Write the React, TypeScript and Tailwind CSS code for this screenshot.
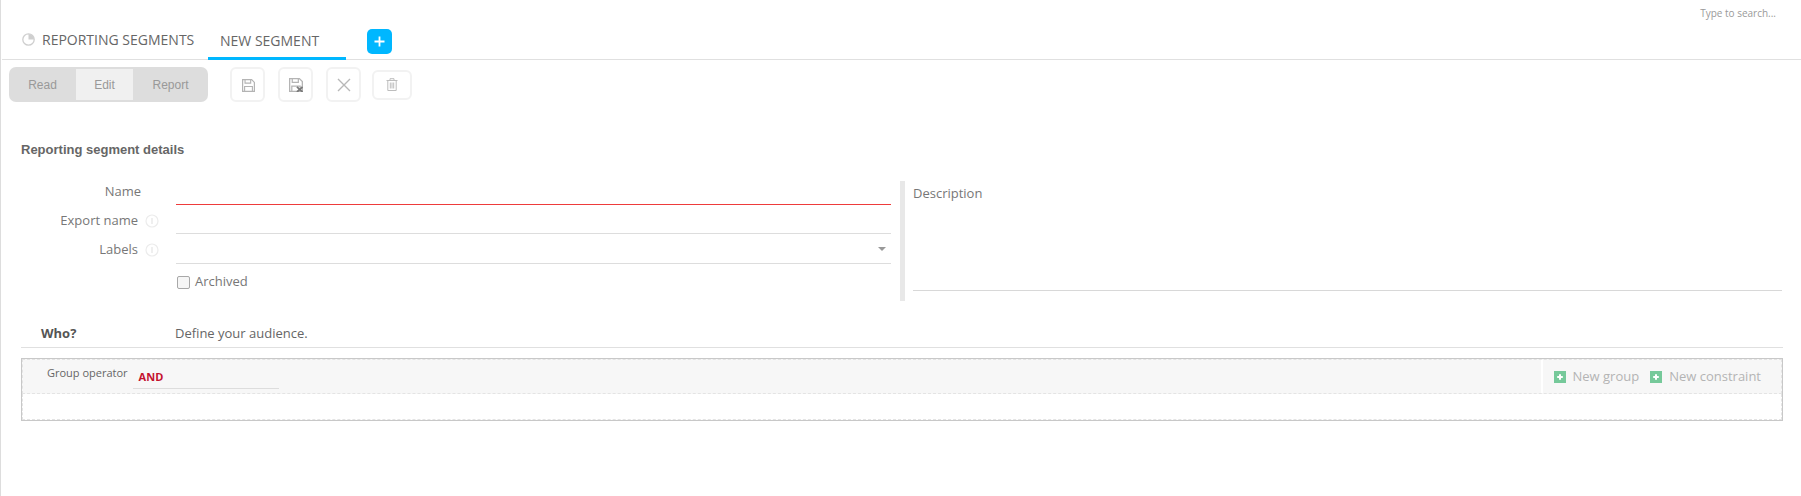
import React from "react";

const open = "font-['Open_Sans',sans-serif]";
const arial = "font-['Liberation_Sans',Arial,sans-serif]";

function Info() {
  return (
    <svg width="14" height="14" viewBox="0 0 14 14" className="ml-[7px] shrink-0">
      <circle cx="7" cy="7" r="6" fill="none" stroke="#ececec" strokeWidth="1.2" />
      <path d="M7 4v6" stroke="#e4e4e4" strokeWidth="1.2" />
    </svg>
  );
}

function Floppy({ x }: { x?: boolean }) {
  return (
    <svg width={x ? 14 : 13} height={x ? 14 : 13} viewBox="0 0 15 15" className="ml-[1px] mt-[1px]">
      <path d="M.7.7h10.4l3.2 3.2v10.4H.7z" fill="none" stroke="#b4b4b4" strokeWidth="1.4" />
      <path d="M3.5 1v3.8h6.5V1" fill="none" stroke="#b4b4b4" strokeWidth="1.3" />
      <path d="M3 14V8.6h9V14" fill="none" stroke="#b4b4b4" strokeWidth="1.3" />
      {x && <path d="M8.5 9.5l6 5.5M14.5 9.5l-6 5.5" stroke="#7a7a7a" strokeWidth="1.9" />}
    </svg>
  );
}

function GreenPlus() {
  return (
    <svg width="12" height="12" viewBox="0 0 12 12" className="shrink-0">
      <rect width="12" height="12" fill="#76c99a" />
      <path d="M6 3.2v5.6M3.2 6h5.6" stroke="#fff" strokeWidth="2" />
    </svg>
  );
}

function ToolBtn({ children }: { children: React.ReactNode }) {
  return (
    <div className="w-[35px] h-[35px] border-2 border-[#f2f2f2] rounded-[6px] flex items-center justify-center">
      {children}
    </div>
  );
}

export default function App() {
  return (
    <div className={`w-[1801px] h-[496px] bg-white border-l-[1.5px] border-[#dddddd] overflow-hidden ${open}`}>
      <div className="h-[24px] flex justify-end items-center pr-[25px] pt-[2px]">
        <span className="text-[10px] text-[#9a9a9a]">Type to search...</span>
      </div>

      <div className="h-[36px] border-b border-[#e0e0e0] flex items-start ml-[1px]">
        <div className="flex items-center h-[31px] pl-[20px] w-[206px]">
          <svg width="13" height="13" viewBox="0 0 13 13" className="mr-[7px] shrink-0">
            <circle cx="6.5" cy="6.5" r="5.7" fill="none" stroke="#cfcfcf" strokeWidth="1.3" />
            <path d="M6.5 6.5V1A5.5 5.5 0 0 1 12 6.5z" fill="#cfcfcf" />
          </svg>
          <span className="text-[14px] text-[#666] whitespace-nowrap">REPORTING SEGMENTS</span>
        </div>
        <div className="w-[138px] h-[36px] border-b-[3px] border-[#00b7ff] pl-[12px] flex items-center pb-[1px]">
          <span className="text-[14px] text-[#666] whitespace-nowrap">NEW SEGMENT</span>
        </div>
        <div className="ml-[21px] mt-[5px] w-[25px] h-[25px] rounded-[5px] bg-[#00b7ff] flex items-center justify-center">
          <svg width="11" height="11" viewBox="0 0 11 11">
            <path d="M5.5.5v10M.5 5.5h10" stroke="#fff" strokeWidth="1.8" />
          </svg>
        </div>
      </div>

      <div className="flex items-center mt-[7px] ml-[8px] h-[35px]">
        <div className={`w-[199px] h-[35px] rounded-[7px] bg-[#dddddd] flex items-center text-[12px] text-[#999] ${arial}`}>
          <span className="w-[67px] text-center pt-[1px]">Read</span>
          <span className="w-[57px] h-[31px] bg-[#f0f0f0] flex items-center justify-center pt-[1px]">Edit</span>
          <span className="w-[75px] text-center pt-[1px]">Report</span>
        </div>
        <div className="ml-[22px] flex items-center gap-[13px]">
          <ToolBtn><Floppy /></ToolBtn>
          <ToolBtn><Floppy x /></ToolBtn>
          <ToolBtn>
            <svg width="14" height="14" viewBox="0 0 14 14">
              <path d="M1 1l12 12M13 1L1 13" stroke="#b8b8b8" strokeWidth="1.4" />
            </svg>
          </ToolBtn>
        </div>
        <div className="ml-[11px] w-[40px] h-[30px] border-2 border-[#f2f2f2] rounded-[6px] flex items-center justify-center">
          <svg width="12" height="13" viewBox="0 0 12 13">
            <path d="M.5 2.5h11M4 2.5V.7h4v1.8M1.8 2.5v10h8.4v-10M4.3 4.5v6M6 4.5v6M7.7 4.5v6" fill="none" stroke="#bdbdbd" strokeWidth="1" />
          </svg>
        </div>
      </div>

      <div className={`ml-[20px] mt-[40px] text-[13px] leading-[16px] font-bold text-[#666] ${arial}`}>
        Reporting segment details
      </div>

      <div className="flex mt-[23px]">
        <div className="w-[890px] shrink-0 flex flex-col">
          <div className="flex h-[24px]">
            <div className="w-[158px] shrink-0 flex items-center justify-end pr-[18px] pb-[2px]">
              <span className="text-[13px] text-[#777]">Name</span>
            </div>
            <div className="ml-[17px] flex-1 border-b border-[#ee3b3b]" />
          </div>
          <div className="flex h-[29px]">
            <div className="w-[158px] shrink-0 flex items-center justify-end pt-[2px]">
              <span className="text-[13px] text-[#777]">Export name</span>
              <Info />
            </div>
            <div className="ml-[17px] flex-1 border-b border-[#dddddd]" />
          </div>
          <div className="flex h-[30px]">
            <div className="w-[158px] shrink-0 flex items-center justify-end pt-[2px]">
              <span className="text-[13px] text-[#777]">Labels</span>
              <Info />
            </div>
            <div className="ml-[17px] flex-1 border-b border-[#dddddd] flex items-center justify-end pr-[5px]">
              <div className="w-0 h-0 border-l-[4px] border-r-[4px] border-t-[4px] border-l-transparent border-r-transparent border-t-[#999]" />
            </div>
          </div>
          <div className="flex items-center h-[36px] ml-[176px]">
            <div className="w-[13px] h-[13px] border border-[#a8a8a8] rounded-[2px] bg-[#f6f6f6]" />
            <span className="ml-[5px] text-[13px] text-[#777]">Archived</span>
          </div>
        </div>
        <div className="ml-[9px] w-[5px] h-[120px] bg-[#e8e8e8] shrink-0" />
        <div className="ml-[8px] w-[869px] h-[110px] border-b border-[#d8d8d8] shrink-0">
          <span className="block mt-[4px] text-[13px] leading-[16px] text-[#777]">Description</span>
        </div>
      </div>

      <div className="ml-[20px] w-[1762px] mt-[18px] h-[29px] border-b border-[#e0e0e0] flex items-center pt-[2px]">
        <span className="ml-[20px] w-[134px] text-[13px] font-bold text-[#555]">Who?</span>
        <span className="text-[13px] text-[#666]">Define your audience.</span>
      </div>

      <div className="ml-[20px] w-[1762px] mt-[10px] h-[63px] border border-[#c8c8c8]">
        <div className="h-[35px] bg-[#f7f7f7] border border-dashed border-[#e4e4e4] flex items-start">
          <span className="ml-[24px] mt-[6px] text-[11px] leading-[14px] text-[#666] whitespace-nowrap">Group operator</span>
          <div className="ml-[5px] w-[146px] h-[29px] border-b border-[#dddddd] pl-[6px] pt-[10px] text-[11px] leading-[14px] font-bold text-[#c4122f]">
            AND
          </div>
          <div className="ml-auto h-[33px] border-l-2 border-white pl-[11px] flex items-center gap-[7px] pr-[20px] text-[13px] text-[#b4b4b4] whitespace-nowrap">
            <GreenPlus />
            <span className="mr-[4px]">New group</span>
            <GreenPlus />
            <span>New constraint</span>
          </div>
        </div>
        <div className="h-[26px] border border-t-0 border-dashed border-[#e4e4e4]" />
      </div>
    </div>
  );
}
